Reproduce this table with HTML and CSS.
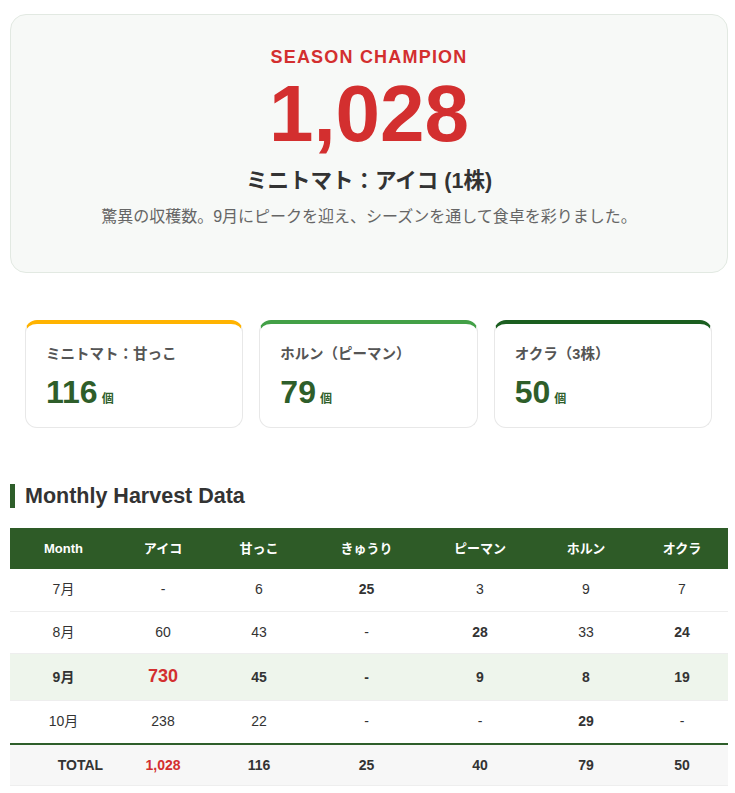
FILE: index.html
```html
<!DOCTYPE html>
<html lang="ja">
<head>
<meta charset="utf-8">
<title>Harvest</title>
<link rel="stylesheet" href="styles.css">
</head>
<body>
<div class="page">
  <section class="hero">
    <div class="hero-label">SEASON CHAMPION</div>
    <div class="hero-number">1,028</div>
    <div class="hero-name">ミニトマト：アイコ (1株)</div>
    <p class="hero-desc">驚異の収穫数。9月にピークを迎え、シーズンを通して食卓を彩りました。</p>
  </section>

  <section class="stats">
    <div class="stat stat-amber">
      <div class="stat-label">ミニトマト：甘っこ</div>
      <div class="stat-value">116<span class="unit">個</span></div>
    </div>
    <div class="stat stat-green">
      <div class="stat-label">ホルン（ピーマン）</div>
      <div class="stat-value">79<span class="unit">個</span></div>
    </div>
    <div class="stat stat-dark">
      <div class="stat-label">オクラ（3株）</div>
      <div class="stat-value">50<span class="unit">個</span></div>
    </div>
  </section>

  <h2 class="section-title">Monthly Harvest Data</h2>

  <table class="data">
    <colgroup>
      <col class="c-month"><col class="c-aiko"><col class="c-amakko"><col class="c-kyuri"><col class="c-piman"><col class="c-horn"><col class="c-okra">
    </colgroup>
    <thead>
      <tr><th>Month</th><th>アイコ</th><th>甘っこ</th><th>きゅうり</th><th>ピーマン</th><th>ホルン</th><th>オクラ</th></tr>
    </thead>
    <tbody>
      <tr><td>7月</td><td>-</td><td>6</td><td class="b">25</td><td>3</td><td>9</td><td>7</td></tr>
      <tr><td>8月</td><td>60</td><td>43</td><td>-</td><td class="b">28</td><td>33</td><td class="b">24</td></tr>
      <tr class="peak"><td>9月</td><td><span class="big">730</span></td><td>45</td><td>-</td><td>9</td><td>8</td><td>19</td></tr>
      <tr><td>10月</td><td>238</td><td>22</td><td>-</td><td>-</td><td class="b">29</td><td>-</td></tr>
    </tbody>
    <tfoot>
      <tr><td class="total-label">TOTAL</td><td class="red">1,028</td><td>116</td><td>25</td><td>40</td><td>79</td><td>50</td></tr>
    </tfoot>
  </table>
</div>
</body>
</html>
```

FILE: styles.css
```css
* { box-sizing: border-box; }
html, body { margin: 0; padding: 0; background: #ffffff; }
body {
  font-family: "Liberation Sans", "Noto Sans CJK JP", Arial, sans-serif;
  color: #333333;
}
.page {
  width: 718px;
  margin-left: 10px;
  padding-top: 14px;
}
.hero {
  background: #f7f9f7;
  border: 1px solid #e2e9e2;
  border-radius: 16px;
  padding: 31px 20px 0;
  height: 259px;
  text-align: center;
}
.hero-label {
  color: #d32f2f;
  font-weight: 700;
  font-size: 18px;
  letter-spacing: 1.2px;
  line-height: 22px;
}
.hero-number {
  color: #d32f2f;
  font-weight: 700;
  font-size: 80px;
  line-height: 88px;
  margin-top: 2px;
}
.hero-name {
  margin-top: 9px;
  font-weight: 700;
  font-size: 21.5px;
  line-height: 28px;
  color: #333333;
}
.hero-desc {
  margin: 10px 0 0;
  font-size: 16px;
  line-height: 24px;
  color: #666666;
}
.stats {
  display: grid;
  grid-template-columns: repeat(3, 1fr);
  gap: 16px;
  margin: 47px 16px 0 15px;
}
.stat {
  background: #ffffff;
  border: 1px solid #e8e8e8;
  border-top: 4px solid #ffb300;
  border-radius: 12px;
  padding: 19px 20px 0;
  height: 108px;
}
.stat-green { border-top-color: #43a047; }
.stat-dark { border-top-color: #1b5e20; }
.stat-label {
  font-size: 14.5px;
  font-weight: 700;
  color: #555555;
  line-height: 22px;
}
.stat-value {
  margin-top: 8px;
  font-size: 32px;
  font-weight: 700;
  color: #2e5e2a;
  line-height: 38px;
}
.unit {
  font-size: 12px;
  margin-left: 4px;
}
.section-title {
  margin: 56px 0 0;
  border-left: 5px solid #2e5e2a;
  padding-left: 10px;
  font-size: 21.5px;
  line-height: 24px;
  color: #333333;
}
.data {
  margin-top: 20px;
  width: 718px;
  border-collapse: collapse;
  table-layout: fixed;
}
.c-month { width: 107px; }
.c-aiko { width: 92px; }
.c-amakko { width: 100px; }
.c-kyuri { width: 115px; }
.c-piman { width: 112px; }
.c-horn { width: 100px; }
.c-okra { width: 92px; }
.data th {
  background: #2e5b27;
  color: #ffffff;
  font-size: 13px;
  font-weight: 700;
  line-height: 17px;
  padding: 12px 8px;
  text-align: center;
}
.data td {
  font-size: 14px;
  line-height: 17.5px;
  padding: 12px 8px;
  text-align: center;
  border-bottom: 1px solid #eeeeee;
  color: #333333;
}
.data td.b { font-weight: 700; }
.data tr.peak td {
  background: #eef5ec;
  font-weight: 700;
  line-height: 21px;
}
.big {
  color: #d32f2f;
  font-size: 18px;
  line-height: 21px;
}
.data tfoot td {
  background: #f7f7f7;
  border-top: 2px solid #2e5e2a;
  font-weight: 700;
  line-height: 16px;
}
.data td.total-label { padding-left: 42px; }
.data td.red { color: #d32f2f; }
```
